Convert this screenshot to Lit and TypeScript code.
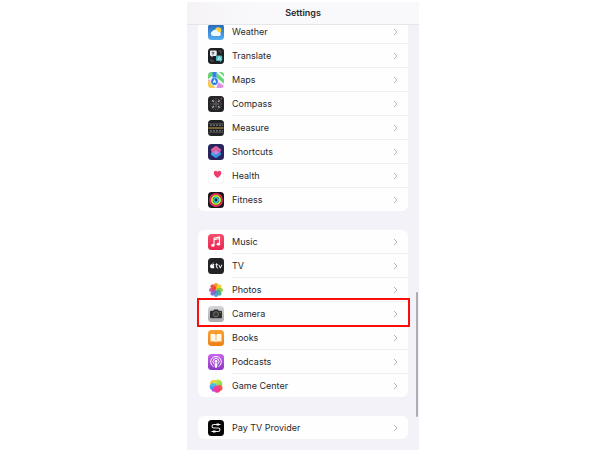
import { LitElement, html, css, svg, SVGTemplateResult } from "lit";
import { customElement, property } from "lit/decorators.js";
import { classMap } from "lit/directives/class-map.js";

const tile = (fill: string) => svg`<rect width="32" height="32" rx="7" fill=${fill} />`;

const petals: [number, string][] = [
  [0, "#f5901a"], [45, "#ead01c"], [90, "#8fc63a"], [135, "#3fae86"],
  [180, "#4599dc"], [225, "#7566c4"], [270, "#c04fa0"], [315, "#ee3f3c"],
];

const icons: Record<string, SVGTemplateResult> = {
  weather: svg`
    <defs><linearGradient id="g" x2="0" y2="1"><stop stop-color="#2467bd" /><stop offset="1" stop-color="#58aef0" /></linearGradient></defs>
    ${tile("url(#g)")}
    <circle cx="20.500" cy="12.500" r="6" fill="#fbd23c" />
    <path d="M10 24a5 5 0 0 1-.5-9.800A6 6 0 0 1 20.500 16A4.200 4.200 0 0 1 23 24Z" fill="#eef6fe" />`,
  translate: svg`
    ${tile("#1c1e22")}
    <path d="M6 5h9a2.500 2.500 0 0 1 2.500 2.500v6A2.500 2.500 0 0 1 15 16h-5l-3 3v-3H6a2 2 0 0 1-2-2V7a2 2 0 0 1 2-2Z" fill="#e9edef" />
    <path d="M10 7v7M7 9h6M8 13l4-3" stroke="#4c5256" fill="none" stroke-width="1.300" />
    <path d="M18 15h8a2.500 2.500 0 0 1 2.500 2.500v6A2.500 2.500 0 0 1 26 26v3l-3-3h-5a2 2 0 0 1-2-2v-7a2 2 0 0 1 2-2Z" fill="#48b9c3" />
    <path d="M19.500 24l3-7 3 7M20.500 22h4" stroke="#e7ffff" fill="none" stroke-width="1.300" />
    <path d="M21 6h5v5M6 22v4h6" stroke="#6c7478" fill="none" stroke-width="1.500" />`,
  maps: svg`
    <defs><clipPath id="c"><rect width="32" height="32" rx="7" /></clipPath></defs>
    <g clip-path="url(#c)">
      <rect width="32" height="32" fill="#edf1ee" />
      <path d="M0 0h10v7L0 14Z" fill="#62d36f" />
      <path d="M17 0h15v23L17 11Z" fill="#61d775" />
      <path d="M22 0l10 9v6L17 1Z" fill="#f8fbf7" />
      <path d="M0 18l10 6 4 8H0Z" fill="#f5cc45" />
      <path d="M20 20l12 8v4H17Z" fill="#e18bea" />
      <path d="M0 15l8 3v4l-8-4Z" fill="#f4a5c4" />
      <path d="M9 0h8v13H9Z" fill="#3382ec" />
      <circle cx="13" cy="19" r="8" fill="#f6faff" />
      <circle cx="13" cy="19" r="6.800" fill="#287ae9" />
      <path d="M13 13.500l4 9-4-1.800-4 1.800Z" fill="#fff" />
    </g>`,
  compass: svg`
    ${tile("#242426")}
    <circle cx="16" cy="16" r="10.500" fill="none" stroke="#77777a" stroke-width="2.200" stroke-dasharray="1.200 2.100" />
    <path d="M16 9v14M9 16h14" stroke="#b9b9bb" stroke-width="1.200" />
    <circle cx="16" cy="16" r="3" fill="#515154" />
    <path d="M8 8l5 2-3 3ZM24 8l-5 2 3 3ZM8 24l5-2-3-3ZM24 24l-5-2 3-3Z" fill="#c4c4c6" />
    <path d="M24 5l4-1-1 4Z" fill="#e34b48" />`,
  measure: svg`
    ${tile("#222224")}
    <path d="M1 7.500h30M1 24.500h30" stroke="#77777a" stroke-width="1.200" />
    <path d="M4 10.500h25M4 21.500h25" stroke="#aaaaab" stroke-width="3" stroke-dasharray="1 2" />
    <path d="M1 16h30" stroke="#c9aa43" stroke-width="2" />`,
  shortcuts: svg`
    <defs>
      <linearGradient id="a" x2="1" y2="1"><stop stop-color="#f0668d" /><stop offset="1" stop-color="#bd58c0" /></linearGradient>
      <linearGradient id="b" x2="1" y2="1"><stop stop-color="#37cbd5" /><stop offset="1" stop-color="#3e74ea" /></linearGradient>
    </defs>
    ${tile("#28245e")}
    <path d="M14.500 12q1.500-.8 3 0l6.500 4q2 1 2 3v1q0 1.800-2 3l-6.500 4.500q-1.500.8-3 0L8 23q-2-1.200-2-3v-1q0-2 2-3Z" fill="url(#b)" />
    <path d="M14.500 4.500q1.500-.8 3 0L24 9q2 1 2 3v1q0 1.800-2 3l-6.500 4.500q-1.500.8-3 0L8 16q-2-1.200-2-3v-1q0-2 2-3Z" fill="url(#a)" />
    <path d="M10 17l6-4 6 4-6 4Z" fill="#c58ae2" />`,
  health: svg`
    <rect x=".5" y=".5" width="31" height="31" rx="7" fill="#fff" stroke="#e8e8ed" />
    <path d="M19 20C14 16.500 11.500 13.500 11.500 10c0-5 5.800-5.800 7.500-2.200 1.700-3.600 7.500-2.800 7.500 2.200 0 3.500-2.500 6.500-7.500 10Z" fill="#ee3c6b" />`,
  fitness: svg`
    ${tile("#1b1820")}
    <circle cx="16" cy="16" r="12" fill="none" stroke="#e8285a" stroke-width="3.600" />
    <circle cx="16" cy="16" r="8.200" fill="none" stroke="#b4ee30" stroke-width="3.800" />
    <circle cx="16" cy="16" r="4.400" fill="none" stroke="#35c9dc" stroke-width="3.200" />`,
  music: svg`
    <defs><linearGradient id="g" x2="0" y2="1"><stop stop-color="#f5506e" /><stop offset="1" stop-color="#e92651" /></linearGradient></defs>
    ${tile("url(#g)")}
    <path d="M12 22V8.500L23 6v13.500M12 11.500l11-2.500" fill="none" stroke="#fff" stroke-width="2.200" />
    <ellipse cx="9.800" cy="22.800" rx="3.400" ry="2.800" fill="#fff" /><ellipse cx="20.800" cy="20.300" rx="3.400" ry="2.800" fill="#fff" />`,
  tv: svg`
    ${tile("#232325")}
    <path d="M9.500 12.800c1-.8 2.500-.8 3.200.4-1.700 1.100-1.500 3.800.4 4.600-.8 2-2 3.500-3.400 2.700-.6-.3-1-.3-1.600 0C5.500 21.800 2.700 16 5.200 13.500c1.200-1.200 2.500-.9 3.300-.4ZM8.800 12.200c0-1.700 1-2.800 2.500-3 .1 1.700-1 2.900-2.500 3Z" fill="#fff" />
    <path d="M17.300 10.500v8q0 2 2.700 1.500M14.800 13.500h5M21.800 13.500l2.900 6.800 2.900-6.800" fill="none" stroke="#fff" stroke-width="1.900" />`,
  photos: svg`${petals.map(
    ([turn, fill]) => svg`<rect x="11.800" y="2" width="8.400" height="13" rx="4.200" fill=${fill} fill-opacity=".92" transform=${`rotate(${turn} 16 16)`} />`
  )}`,
  camera: svg`
    <defs><linearGradient id="g" x2="0" y2="1"><stop stop-color="#d6d6d8" /><stop offset="1" stop-color="#a9a9ac" /></linearGradient></defs>
    ${tile("url(#g)")}
    <path d="M6 9.500h4.500l1.800-2.700h7.400l1.800 2.700H26q2 0 2 2v11q0 2-2 2H6q-2 0-2-2v-11q0-2 2-2Z" fill="#2f2f31" />
    <circle cx="16" cy="16.500" r="5" fill="none" stroke="#9c9ca0" stroke-width="1.300" />
    <circle cx="16" cy="16.500" r="3" fill="#3c3c3e" /><circle cx="24.500" cy="12.500" r="1" fill="#d8b24b" />`,
  books: svg`
    <defs><linearGradient id="g" x2="0" y2="1"><stop stop-color="#f8a234" /><stop offset="1" stop-color="#ef7f17" /></linearGradient></defs>
    ${tile("url(#g)")}
    <path d="M15.400 9.500Q10.500 6.500 5 8.500v15q5.500-2 10.400 1ZM16.600 9.500Q21.500 6.500 27 8.500v15q-5.500-2-10.400 1Z" fill="#fff7e8" />`,
  podcasts: svg`
    <defs><linearGradient id="g" x2="0" y2="1"><stop stop-color="#c965ea" /><stop offset="1" stop-color="#8b35c4" /></linearGradient></defs>
    ${tile("url(#g)")}
    <path d="M10.500 25a10.800 10.800 0 1 1 11 0M11.800 19.500a6.200 6.200 0 1 1 8.400 0" fill="none" stroke="#fff" stroke-width="1.900" stroke-linecap="round" />
    <circle cx="16" cy="14.800" r="2.700" fill="#fff" />
    <path d="M13 20q0-1.500 3-1.500t3 1.500l-.9 6.300q-.3 1.400-2.100 1.400t-2.100-1.400Z" fill="#fff" />`,
  games: svg`
    <defs>
      <linearGradient id="a" x2="1" y2="1"><stop stop-color="#f6e43a" /><stop offset="1" stop-color="#4fdc62" /></linearGradient>
      <linearGradient id="b" x2="1" y2="1"><stop stop-color="#f9468a" /><stop offset="1" stop-color="#f32e9b" /></linearGradient>
      <linearGradient id="d" x2="0" y2="1"><stop stop-color="#55cfe6" /><stop offset="1" stop-color="#3f7df4" /></linearGradient>
    </defs>
    <circle cx="11.500" cy="11.500" r="7.500" fill="#f8c23a" />
    <circle cx="19.500" cy="12" r="9.200" fill="url(#a)" />
    <circle cx="10.500" cy="17" r="7.200" fill="url(#d)" />
    <circle cx="23" cy="20" r="6" fill="#ff5a40" />
    <circle cx="18" cy="22.500" r="6.800" fill="url(#b)" />
    <circle cx="10.500" cy="24.500" r="2.800" fill="#a954e8" />`,
  provider: svg`
    ${tile("#060607")}
    <path d="M21 9H12q-4 0-4 3.500T12 16h8q4 0 4 3.500T20 23h-9" fill="none" stroke="#e9e9ea" stroke-width="2.200" />
    <path d="M17 6.800h5v4.400h-5ZM10 20.800h5v4.400h-5Z" fill="#fff" />
    <path d="M22 9h3M7 23h3" stroke="#fff" stroke-width="2.400" />`,
};

@customElement("app-icon")
class AppIcon extends LitElement {
  @property() name = "";

  static styles = css`
    :host { display: block; flex: none; width: 16px; height: 16px; }
    .art { display: block; width: 100%; height: 100%; }
  `;

  render() {
    return html`<svg class="art" viewBox="0 0 32 32" aria-hidden="true">${icons[this.name]}</svg>`;
  }
}

interface Item { icon: string; label: string; marked?: boolean; }

const groups: Item[][] = [
  [
    { icon: "weather", label: "Weather" },
    { icon: "translate", label: "Translate" },
    { icon: "maps", label: "Maps" },
    { icon: "compass", label: "Compass" },
    { icon: "measure", label: "Measure" },
    { icon: "shortcuts", label: "Shortcuts" },
    { icon: "health", label: "Health" },
    { icon: "fitness", label: "Fitness" },
  ],
  [
    { icon: "music", label: "Music" },
    { icon: "tv", label: "TV" },
    { icon: "photos", label: "Photos" },
    { icon: "camera", label: "Camera", marked: true },
    { icon: "books", label: "Books" },
    { icon: "podcasts", label: "Podcasts" },
    { icon: "games", label: "Game Center" },
  ],
  [{ icon: "provider", label: "Pay TV Provider" }],
];

@customElement("app-root")
class AppRoot extends LitElement {
  static styles = css`
    :host {
      display: flex;
      justify-content: center;
      box-sizing: border-box;
      height: 100vh;
      padding: 2px 0 2px 6px;
      background: #fff;
      color: #29292c;
      font: 9px/12px Inter, "Liberation Sans", sans-serif;
    }
    .phone {
      position: relative;
      display: flex;
      flex-direction: column;
      width: 100%;
      max-width: 232px;
      background: #f3f2f9;
    }
    .bar {
      flex: none;
      padding: 5px 0;
      background: linear-gradient(90deg, #f5f3f5, #f9f8fb 30%);
      border-bottom: 1px solid #e6e5ea;
      text-align: center;
    }
    .title { margin: 0; font: inherit; font-weight: 600; }
    .list {
      flex: 1;
      min-height: 0;
      display: flex;
      flex-direction: column;
      justify-content: flex-end;
      gap: 19px;
      padding: 0 11px 11px;
      overflow: hidden;
    }
    .card {
      flex: none;
      margin: 0;
      padding: 0;
      list-style: none;
      background: #fefeff;
      border-radius: 6px;
    }
    .item { position: relative; }
    .row {
      display: flex;
      align-items: center;
      gap: 8px;
      padding-left: 10px;
      color: inherit;
      text-decoration: none;
    }
    .cell {
      flex: 1;
      display: flex;
      align-items: center;
      justify-content: space-between;
      height: 23px;
      padding-right: 10px;
      border-bottom: 1px solid #f0f0f3;
    }
    .item:last-child .cell { border-bottom: 0; }
    .arrow { width: 5px; height: 8px; fill: none; stroke: #b4b4b9; stroke-width: 1; }
    .marked::after {
      content: "";
      position: absolute;
      inset: -4px -2px -1px -1px;
      border: 2px solid #fb0d0d;
      pointer-events: none;
    }
    .thumb {
      position: absolute;
      right: 1px;
      bottom: 33px;
      width: 2px;
      height: 28%;
      border-radius: 1px;
      background: #aeadb3;
    }
  `;

  render() {
    return html`
      <main class="phone">
        <header class="bar"><h1 class="title">Settings</h1></header>
        <nav class="list" aria-label="Settings">
          ${groups.map((group) => html`
            <ul class="card">
              ${group.map((item) => html`
                <li class=${classMap({ item: true, marked: !!item.marked })}>
                  <a class="row" href="#${item.icon}">
                    <app-icon name=${item.icon}></app-icon>
                    <span class="cell">
                      ${item.label}
                      <svg class="arrow" viewBox="0 0 5 8" aria-hidden="true"><path d="M1 1l3 3-3 3" /></svg>
                    </span>
                  </a>
                </li>`)}
            </ul>`)}
        </nav>
        <div class="thumb"></div>
      </main>
    `;
  }
}
